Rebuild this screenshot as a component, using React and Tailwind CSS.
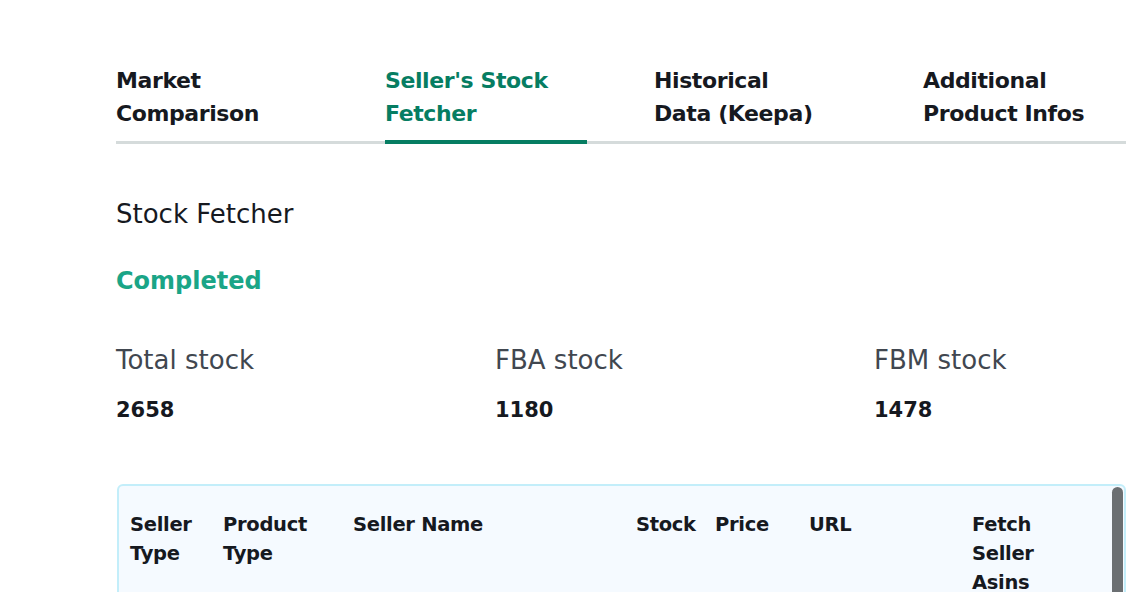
import React, { useState } from 'react';

const tabs = [
    { id: 'market', label: ['Market', 'Comparison'] },
    { id: 'stock', label: ["Seller's Stock", 'Fetcher'] },
    { id: 'keepa', label: ['Historical', 'Data (Keepa)'] },
    { id: 'infos', label: ['Additional', 'Product Infos'] },
];

const stats = [
    { label: 'Total stock', value: 2658 },
    { label: 'FBA stock', value: 1180 },
    { label: 'FBM stock', value: 1478 },
];

const columns = [
    { key: 'sellerType', label: ['Seller', 'Type'], w: 'w-[93px]' },
    { key: 'productType', label: ['Product', 'Type'], w: 'w-[130px]' },
    { key: 'sellerName', label: ['Seller Name'], w: 'w-[283px]' },
    { key: 'stock', label: ['Stock'], w: 'w-[79px]' },
    { key: 'price', label: ['Price'], w: 'w-[94px]' },
    { key: 'url', label: ['URL'], w: 'w-[163px]' },
    { key: 'fetch', label: ['Fetch', 'Seller', 'Asins'], w: 'w-[100px]' },
];

const App = () => {
    const [active, setActive] = useState('stock');

    return (
        <div className="h-[592px] w-full bg-white font-['DejaVu_Sans',sans-serif] text-[#16191f] pl-[116px] pt-[64px] overflow-hidden">
            {/* tabs */}
            <div className="flex border-b-[3px] border-[#d5dbdb] w-[1010px]">
                {tabs.map((tab) => (
                    <button
                        key={tab.id}
                        onClick={() => setActive(tab.id)}
                        className="w-[269px] shrink-0 text-left"
                    >
                        <div
                            className={`inline-block pb-[10px] -mb-[3px] border-b-[4px] text-[22px] leading-[33px] font-bold tracking-[-0.4px] ${
                                active === tab.id
                                    ? 'border-[#067d62] text-[#067d62] w-[202px]'
                                    : 'border-transparent text-[#16191f]'
                            }`}
                        >
                            {tab.label.map((l) => (
                                <div key={l} className="whitespace-nowrap">{l}</div>
                            ))}
                        </div>
                    </button>
                ))}
            </div>

            <h2 className="mt-[52px] text-[26px] leading-[36px] text-[#16191f]">Stock Fetcher</h2>
            <p className="mt-[31px] text-[24px] leading-[36px] font-semibold text-[#1aa587]">Completed</p>

            <div className="mt-[44px] flex">
                {stats.map((s) => (
                    <div key={s.label} className="w-[379px] shrink-0">
                        <div className="text-[26px] leading-[34px] text-[#414750]">{s.label}</div>
                        <div className="mt-[18px] text-[21px] leading-[30px] font-bold text-[#16191f]">{s.value}</div>
                    </div>
                ))}
            </div>

            {/* table */}
            <div className="mt-[59px] ml-[1px] w-[1009px] h-[200px] border-[2px] border-[#c3eefa] rounded-tl-[6px] rounded-tr-[6px] bg-[#f5faff] flex relative">
                <div className="flex pl-[11px] pt-[24px] text-[19.5px] leading-[29px] font-bold text-[#16191f] tracking-[-0.3px]">
                    {columns.map((c) => (
                        <div key={c.key} className={`${c.w} shrink-0`}>
                            {c.label.map((l) => (
                                <div key={l} className="whitespace-nowrap">{l}</div>
                            ))}
                        </div>
                    ))}
                </div>
                <div className="absolute right-[1px] top-[1px] w-[11px] h-[300px] rounded-t-full bg-[#6b6f72]" />
            </div>
        </div>
    );
};

export default App;
